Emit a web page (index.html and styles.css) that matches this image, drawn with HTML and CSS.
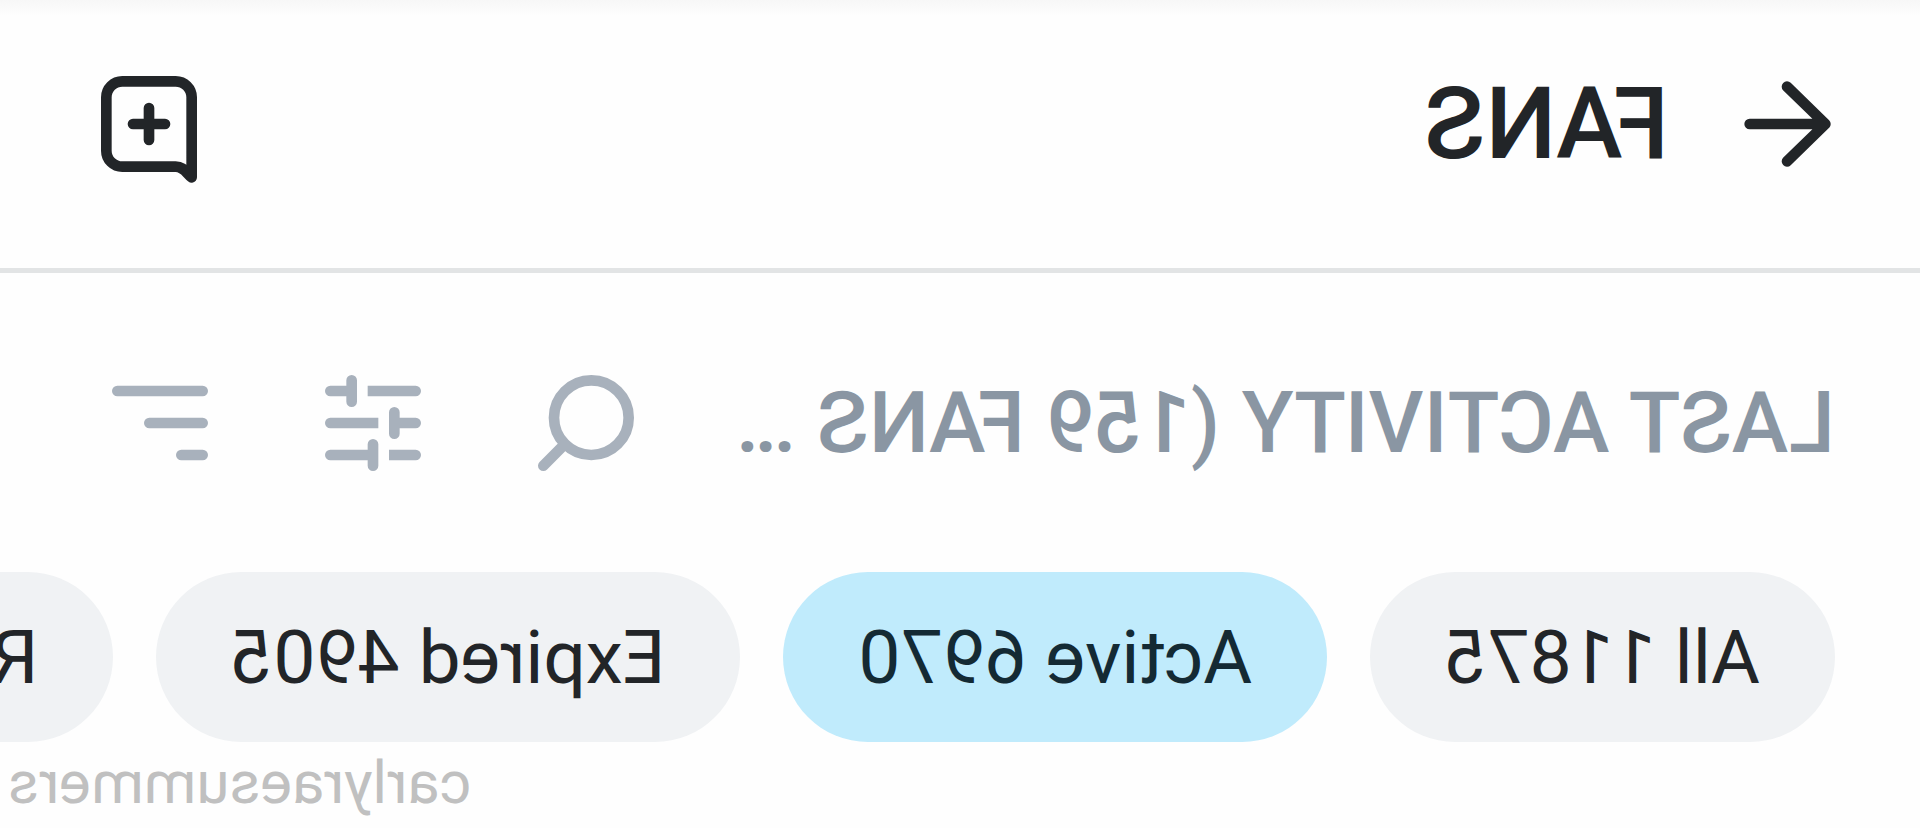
FILE: index.html
```html
<!DOCTYPE html>
<html lang="en">
<head>
    <meta charset="UTF-8">
    <meta name="viewport" content="width=device-width, initial-scale=1.0">
    <title>Fans</title>
    <link rel="stylesheet" href="styles.css">
</head>
<body>
    <div class="page">
        <header class="header">
            <button class="icon-btn" aria-label="Back">
                <svg class="icon" viewBox="0 0 24 24"><path d="M19 12H5M12 5l-7.200 7 7.200 7"/></svg>
            </button>
            <h1 class="title">FANS</h1>
            <button class="icon-btn" aria-label="New message">
                <svg class="icon" viewBox="0 0 24 24">
                    <path d="M4 22V7a3 3 0 0 1 3-3h10a3 3 0 0 1 3 3v10a3 3 0 0 1-3 3H7c-1.500 0-1.900 1.100-3 2z"/>
                    <path d="M12 9v6M9 12h6"/>
                </svg>
            </button>
        </header>

        <div class="toolbar">
            <h2 class="subtitle">LAST ACTIVITY (159 FANS …</h2>
            <div class="tools">
                <button class="icon-btn" aria-label="Search">
                    <svg class="icon" viewBox="0 0 24 24"><circle cx="11" cy="11" r="7"/><path d="M16 16l4 4"/></svg>
                </button>
                <button class="icon-btn" aria-label="Filters">
                    <svg class="icon" viewBox="0 0 24 24">
                        <path d="M16 4v4M16 6h4M8 10v4M4 12h4M12 16v4M12 18h8"/>
                        <!-- half rounded bars, flat on the side of the knob -->
                        <path class="solid" d="M4 5h9v2H4a1 1 0 0 1 0-2zM11 11h9a1 1 0 0 1 0 2h-9zM4 17h5v2H4a1 1 0 0 1 0-2z"/>
                    </svg>
                </button>
                <button class="icon-btn" aria-label="Sort">
                    <svg class="icon" viewBox="0 0 24 24"><path d="M4 6h16M4 12h10M4 18h4"/></svg>
                </button>
            </div>
        </div>

        <nav class="chips">
            <button class="chip">All 11875</button>
            <button class="chip active">Active 6970</button>
            <button class="chip">Expired 4905</button>
            <button class="chip">R</button>
        </nav>

        <p class="watermark">carlyraesummers</p>
    </div>
</body>
</html>
```
FILE: styles.css
```css
*{
    box-sizing: border-box;
}
body{
    margin: 0;
    background: #fefefe;
    color: #222528;
    font-family: Roboto, "Liberation Sans", sans-serif;
    overflow: hidden;
}
.page{
    transform: scaleX(-1);
    overflow: hidden;
    min-height: 100vh;
    background: linear-gradient(#f7f7f7, #fefefe 16px);
}
h1, h2, p{
    margin: 0;
    font-weight: 500;
    white-space: nowrap;
}
button{
    border: 0;
    padding: 0;
    background: none;
    color: inherit;
    font-family: inherit;
    cursor: pointer;
}
.icon-btn{
    flex: none;
    width: 128px;
    height: 128px;
}
.icon{
    display: block;
    width: 100%;
    height: 100%;
    fill: none;
    stroke: currentColor;
    stroke-width: 2;
    stroke-linecap: round;
    stroke-linejoin: round;
}
.icon .solid{
    fill: currentColor;
    stroke: none;
}
.header{
    display: flex;
    align-items: center;
    gap: 54px;
    padding: 60px 85px 80px 69px;
    border-bottom: 5px solid #e2e4e5;
}
.title{
    flex: 1;
    font-size: 100px;
    line-height: 120px;
}
.toolbar{
    display: flex;
    align-items: center;
    justify-content: space-between;
    padding: 86px 96px 85px 85px;
    color: #8a96a3;
}
.subtitle{
    font-size: 85px;
    line-height: 100px;
}
.tools{
    display: flex;
    gap: 85px;
    color: #a8b1bc;
}
.chips{
    display: flex;
    gap: 43px;
    padding-left: 85px;
}
.chip{
    flex: none;
    padding: 0 75px;
    border-radius: 85px;
    background: #f0f2f4;
    font-size: 75px;
    line-height: 170px;
}
.chip.active{
    background: #c0ebfc;
    color: #142a34;
}
.watermark{
    padding: 5px 8px 0;
    color: #c0c0c0;
    font-size: 60px;
    font-weight: 400;
    line-height: 72px;
    text-align: right;
}
```
